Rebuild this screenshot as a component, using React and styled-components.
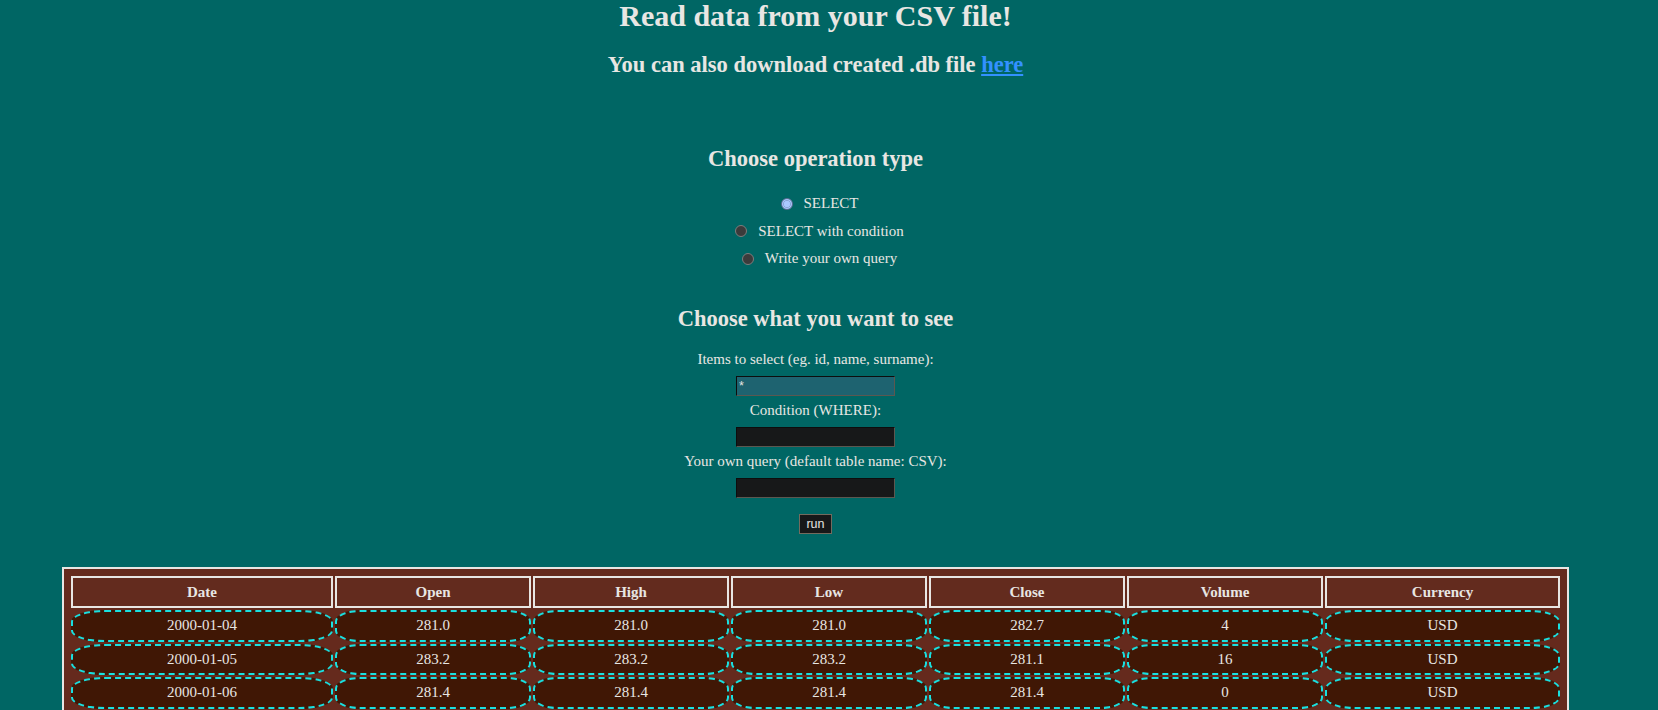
import React from 'react';
import styled, { createGlobalStyle } from 'styled-components';

const GlobalStyle = createGlobalStyle`
    html, body {
        margin: 0;
        padding: 0;
        background-color: #006664;
        overflow: hidden;
    }
`;

const Page = styled.div`
    width: 1631px;
    display: flex;
    flex-direction: column;
    align-items: center;
    font-family: "Liberation Serif", "Times New Roman", serif;
    font-size: 15px;
    color: #e8e6e3;
`;

const Title = styled.h1`
    font-size: 30px;
    line-height: 35px;
    font-weight: 700;
    margin: -2px 0 0;
`;

const Heading = styled.h2`
    font-size: 22.5px;
    line-height: 26px;
    font-weight: 700;
    margin: ${({ $top }) => $top}px 0 0;

    a {
        color: #3391ff;
        text-decoration: underline;
    }
`;

const RadioGroup = styled.div`
    display: flex;
    flex-direction: column;
    align-items: center;
    margin-top: 18px;
`;

const RadioRow = styled.label`
    height: 27.5px;
    display: flex;
    align-items: center;
    gap: 11px;
    padding-left: 8px;
`;

const Radio = styled.input`
    appearance: none;
    margin: 0;
    width: 12px;
    height: 12px;
    box-sizing: border-box;
    border-radius: 50%;
    border: 1px solid #7d7d7d;
    background: #3b3b3b;

    &:checked {
        border-color: #5d6d92;
        background: radial-gradient(circle, #a9c8ff 0 40%, #8aa4d6 50%, #a9c8ff 62%);
    }
`;

const Form = styled.div`
    display: flex;
    flex-direction: column;
    align-items: center;
    margin-top: 19.5px;
`;

const FieldLabel = styled.label`
    line-height: 17px;
`;

const Field = styled.input`
    box-sizing: border-box;
    width: 159px;
    height: 20px;
    margin: 8px 0 6px;
    padding: 0 2px;
    border-width: 1px;
    border-style: solid;
    border-color: #0d0d0d #5c5750 #5c5750 #0d0d0d;
    background: ${({ $filled }) => ($filled ? '#1e6370' : '#171819')};
    color: #e8e6e3;
    font-family: "Liberation Sans", Arial, sans-serif;
    font-size: 12.5px;
    outline: none;
`;

const RunButton = styled.button`
    box-sizing: border-box;
    width: 33px;
    height: 20px;
    margin-top: 10px;
    padding: 0;
    background: #171819;
    color: #e8e6e3;
    border: 1px solid #736b5e;
    font-family: "Liberation Sans", Arial, sans-serif;
    font-size: 12.5px;
`;

const Table = styled.table`
    width: 1507px;
    table-layout: fixed;
    margin-top: 33px;
    border: 2px solid #e8e6e3;
    border-spacing: 2px;
    padding: 5px;
    background: #652a1d;
    font-size: 15px;
`;

const HeadCell = styled.th`
    box-sizing: border-box;
    height: 32px;
    width: ${({ $w }) => $w}px;
    padding: 0;
    border: 2px solid #e8e6e3;
    background: #632b1e;
    font-weight: 700;
    text-align: center;
`;

const DataCell = styled.td`
    box-sizing: border-box;
    height: 31.5px;
    padding: 0;
    border: 2px dashed #19e0e0;
    border-radius: 13% / 36%;
    background: #401705;
    text-align: center;
`;

const columns = [
    { name: 'Date', width: 262 },
    { name: 'Open', width: 196 },
    { name: 'High', width: 196 },
    { name: 'Low', width: 196 },
    { name: 'Close', width: 196 },
    { name: 'Volume', width: 196 },
    { name: 'Currency', width: 235 },
];

const rows = [
    ['2000-01-04', '281.0', '281.0', '281.0', '282.7', '4', 'USD'],
    ['2000-01-05', '283.2', '283.2', '283.2', '281.1', '16', 'USD'],
    ['2000-01-06', '281.4', '281.4', '281.4', '281.4', '0', 'USD'],
    ['2000-01-07', '281.9', '281.9', '281.9', '281.9', '0', 'USD'],
];

const App = () => {
    return (
        <Page>
            <GlobalStyle />
            <Title>Read data from your CSV file!</Title>
            <Heading $top={19}>
                You can also download created .db file <a href="#download">here</a>
            </Heading>

            <Heading $top={68}>Choose operation type</Heading>
            <RadioGroup>
                <RadioRow>
                    <Radio type="radio" name="operation" defaultChecked />
                    SELECT
                </RadioRow>
                <RadioRow>
                    <Radio type="radio" name="operation" />
                    SELECT with condition
                </RadioRow>
                <RadioRow>
                    <Radio type="radio" name="operation" />
                    Write your own query
                </RadioRow>
            </RadioGroup>

            <Heading $top={33}>Choose what you want to see</Heading>
            <Form>
                <FieldLabel htmlFor="items">Items to select (eg. id, name, surname):</FieldLabel>
                <Field id="items" type="text" defaultValue="*" $filled />
                <FieldLabel htmlFor="condition">Condition (WHERE):</FieldLabel>
                <Field id="condition" type="text" />
                <FieldLabel htmlFor="query">Your own query (default table name: CSV):</FieldLabel>
                <Field id="query" type="text" />
                <RunButton type="button">run</RunButton>
            </Form>

            <Table>
                <thead>
                    <tr>
                        {columns.map((col) => (
                            <HeadCell key={col.name} $w={col.width}>{col.name}</HeadCell>
                        ))}
                    </tr>
                </thead>
                <tbody>
                    {rows.map((row) => (
                        <tr key={row[0]}>
                            {row.map((value, i) => (
                                <DataCell key={i}>{value}</DataCell>
                            ))}
                        </tr>
                    ))}
                </tbody>
            </Table>
        </Page>
    );
};

export default App;
